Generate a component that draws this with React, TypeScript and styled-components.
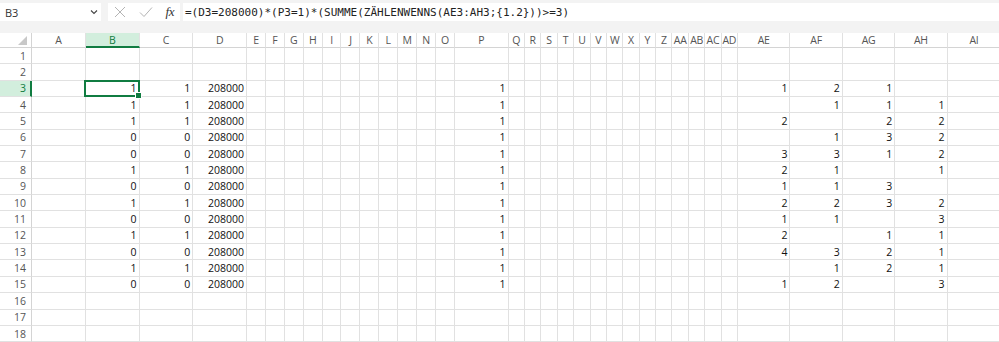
import styled, { createGlobalStyle } from 'styled-components';

const GlobalStyle = createGlobalStyle`
  html, body {
    margin: 0;
    padding: 0;
    background: #ffffff;
    overflow: hidden;
  }
`;

const GREEN = '#107c41';
const GRID = '#e1e1e1';
const HEAD_LINE = '#d4d4d4';
const ROW_H = 16.35;

type Col = { name: string; w: number };

const narrow = (names: string[], w: number): Col[] => names.map((name) => ({ name, w }));

const COLUMNS: Col[] = [
  ...narrow(['A', 'B', 'C', 'D'], 53.75),
  ...narrow(['E', 'F', 'G', 'H', 'I', 'J', 'K', 'L', 'M', 'N', 'O'], 18.9),
  { name: 'P', w: 53.75 },
  ...narrow(['Q', 'R', 'S', 'T', 'U', 'V', 'W', 'X', 'Y', 'Z', 'AA', 'AB', 'AC', 'AD'], 16.4),
  ...narrow(['AE', 'AF', 'AG', 'AH'], 52.4),
  { name: 'AI', w: 53.75 },
];

// B, C, D, P, AE, AF, AG, AH per row ('' = empty)
const RAW: Record<number, string[]> = {
  3: ['1', '1', '208000', '1', '1', '2', '1', ''],
  4: ['1', '1', '208000', '1', '', '1', '1', '1'],
  5: ['1', '1', '208000', '1', '2', '', '2', '2'],
  6: ['0', '0', '208000', '1', '', '1', '3', '2'],
  7: ['0', '0', '208000', '1', '3', '3', '1', '2'],
  8: ['1', '1', '208000', '1', '2', '1', '', '1'],
  9: ['0', '0', '208000', '1', '1', '1', '3', ''],
  10: ['1', '1', '208000', '1', '2', '2', '3', '2'],
  11: ['0', '0', '208000', '1', '1', '1', '', '3'],
  12: ['1', '1', '208000', '1', '2', '', '1', '1'],
  13: ['0', '0', '208000', '1', '4', '3', '2', '1'],
  14: ['1', '1', '208000', '1', '', '1', '2', '1'],
  15: ['0', '0', '208000', '1', '1', '2', '', '3'],
};
const DATA_COLS = ['B', 'C', 'D', 'P', 'AE', 'AF', 'AG', 'AH'];

const valueAt = (row: number, col: string) => {
  const r = RAW[row];
  const i = DATA_COLS.indexOf(col);
  return r && i >= 0 ? r[i] : '';
};

const FORMULA = '=(D3=208000)*(P3=1)*(SUMME(ZÄHLENWENNS(AE3:AH3;{1.2}))>=3)';

const Page = styled.div`
  width: 999px;
  height: 342px;
  overflow: hidden;
  display: flex;
  flex-direction: column;
`;

const TopBar = styled.div`
  background: #f3f3f3;
  padding: 3px 0 12px 0;
  display: flex;
  align-items: stretch;
  gap: 7px;
  height: 18px;
  flex: none;
`;

const NameBox = styled.div`
  width: 101px;
  background: #ffffff;
  display: flex;
  align-items: center;
  justify-content: space-between;
  padding: 0 3px 0 5px;
  box-sizing: border-box;
  font-family: 'Open Sans', 'Noto Sans', sans-serif;
  font-size: 11px;
  color: #333333;
`;

const ToolBox = styled.div`
  width: 72px;
  background: #ffffff;
  display: flex;
  align-items: center;
  justify-content: space-between;
  padding: 0 6px 0 6px;
  box-sizing: border-box;
`;

const Fx = styled.span`
  font-family: 'Liberation Serif', 'DejaVu Serif', serif;
  font-style: italic;
  font-size: 13px;
  color: #333333;
  letter-spacing: -0.5px;
`;

const FormulaBox = styled.div`
  flex: 1;
  margin-left: -4px;
  background: #ffffff;
  display: flex;
  align-items: center;
  padding-left: 2px;
  font-family: 'DejaVu Sans Mono', 'Liberation Mono', monospace;
  font-size: 11px;
  color: #222222;
  white-space: nowrap;
`;

const Sheet = styled.div<{ $cols: string }>`
  display: grid;
  grid-template-columns: ${({ $cols }) => $cols};
  grid-template-rows: 15px repeat(18, ${ROW_H}px);
  flex: none;
`;

const Corner = styled.div`
  background: #ffffff;
  border-right: 1px solid ${HEAD_LINE};
  border-bottom: 1px solid ${HEAD_LINE};
  box-sizing: border-box;
  display: flex;
  align-items: flex-end;
  justify-content: flex-end;
  padding: 0 4px 2px 0;
`;

const ColHead = styled.div<{ $active?: boolean }>`
  background: ${({ $active }) => ($active ? '#d2eedd' : '#ffffff')};
  color: ${({ $active }) => ($active ? GREEN : '#555555')};
  border-right: 1px solid ${GRID};
  border-bottom: ${({ $active }) => ($active ? `2px solid ${GREEN}` : `1px solid ${HEAD_LINE}`)};
  box-sizing: border-box;
  display: flex;
  align-items: center;
  justify-content: center;
  font-family: 'Open Sans', 'Noto Sans', sans-serif;
  font-size: 10.5px;
  overflow: hidden;
  white-space: nowrap;
  letter-spacing: -0.3px;
`;

const RowHead = styled.div<{ $active?: boolean }>`
  background: ${({ $active }) => ($active ? '#d2eedd' : '#ffffff')};
  color: ${({ $active }) => ($active ? GREEN : '#555555')};
  border-right: ${({ $active }) => ($active ? `2px solid ${GREEN}` : `1px solid ${HEAD_LINE}`)};
  border-bottom: 1px solid ${GRID};
  box-sizing: border-box;
  display: flex;
  align-items: center;
  justify-content: flex-end;
  padding-right: ${({ $active }) => ($active ? '4px' : '5px')};
  font-family: 'Open Sans', 'Noto Sans', sans-serif;
  font-size: 10.5px;
`;

const Cell = styled.div<{ $selected?: boolean }>`
  position: relative;
  z-index: ${({ $selected }) => ($selected ? 2 : 0)};
  border-right: 1px solid ${GRID};
  border-bottom: 1px solid ${GRID};
  box-sizing: border-box;
  display: flex;
  align-items: center;
  justify-content: flex-end;
  padding-right: 2px;
  font-family: 'Open Sans', 'Noto Sans', sans-serif;
  font-size: 10.5px;
  color: #111111;
  white-space: nowrap;
`;

const Selection = styled.div`
  position: absolute;
  top: -1px;
  left: -2px;
  right: -1px;
  bottom: -1px;
  border: 2px solid ${GREEN};
  pointer-events: none;
`;

const FillHandle = styled.div`
  position: absolute;
  right: -4px;
  bottom: -4px;
  width: 5px;
  height: 5px;
  background: ${GREEN};
  border: 1px solid #ffffff;
`;

const Chevron = () => (
  <svg width="8" height="6" viewBox="0 0 8 6">
    <polyline points="1,1.5 4,4.5 7,1.5" fill="none" stroke="#444" strokeWidth="1.1" />
  </svg>
);

const CancelIcon = () => (
  <svg width="12" height="12" viewBox="0 0 12 12">
    <path d="M1 1 L11 11 M11 1 L1 11" stroke="#b4b4b4" strokeWidth="1" fill="none" />
  </svg>
);

const EnterIcon = () => (
  <svg width="14" height="12" viewBox="0 0 14 12">
    <polyline points="1,6.5 5,10.5 13,1.5" stroke="#b4b4b4" strokeWidth="1" fill="none" />
  </svg>
);

const CornerMark = () => (
  <svg width="9" height="9" viewBox="0 0 9 9">
    <polygon points="9,0 9,9 0,9" fill="#c8c8c8" />
  </svg>
);

export default function App() {
  const template = ['32px', ...COLUMNS.map((c) => `${c.w}px`)].join(' ');
  const rows = Array.from({ length: 18 }, (_, i) => i + 1);

  return (
    <Page>
      <GlobalStyle />
      <TopBar>
        <NameBox>
          <span>B3</span>
          <Chevron />
        </NameBox>
        <ToolBox>
          <CancelIcon />
          <EnterIcon />
          <Fx>fx</Fx>
        </ToolBox>
        <FormulaBox>{FORMULA}</FormulaBox>
      </TopBar>
      <Sheet $cols={template}>
        <Corner>
          <CornerMark />
        </Corner>
        {COLUMNS.map((c) => (
          <ColHead key={c.name} $active={c.name === 'B'}>
            {c.name}
          </ColHead>
        ))}
        {rows.map((r) => [
          <RowHead key={`h${r}`} $active={r === 3}>
            {r}
          </RowHead>,
          ...COLUMNS.map((c) => {
            const selected = r === 3 && c.name === 'B';
            return (
              <Cell key={`${c.name}${r}`} $selected={selected}>
                {valueAt(r, c.name)}
                {selected && (
                  <Selection>
                    <FillHandle />
                  </Selection>
                )}
              </Cell>
            );
          }),
        ])}
      </Sheet>
    </Page>
  );
}
